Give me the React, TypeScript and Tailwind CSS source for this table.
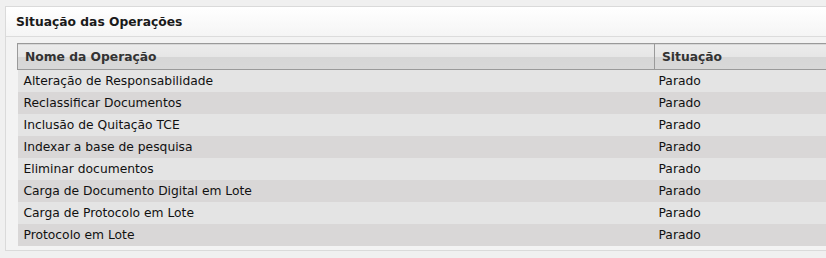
const operacoes = [
  "Alteração de Responsabilidade",
  "Reclassificar Documentos",
  "Inclusão de Quitação TCE",
  "Indexar a base de pesquisa",
  "Eliminar documentos",
  "Carga de Documento Digital em Lote",
  "Carga de Protocolo em Lote",
  "Protocolo em Lote",
];

export default function App() {
  return (
    <div className="h-[258px] w-[826px] overflow-hidden bg-[#f0f0f0] pl-[5px] pt-[6px] font-['DejaVu_Sans',Verdana,sans-serif] text-[12.3px] text-[#111]">
      <div className="h-[245px] w-[900px] border border-[#dadada] bg-[#f3f3f3]">
        {/* panel title */}
        <div className="flex h-[30px] items-center border-b border-[#dcdcdc] bg-gradient-to-b from-white to-[#f5f5f5] pl-[10px] pt-[2px] font-bold text-[#1a1a1a]">
          Situação das Operações
        </div>

        <div className="pl-[11px] pt-[6px]">
          <table className="w-[900px] border-collapse">
            <thead>
              <tr className="h-[26px] border-t border-b border-[#9a9a9a] bg-[linear-gradient(to_bottom,#ececec_0%,#e6e6e6_48%,#d6d6d6_52%,#d8d8d8_100%)] text-left font-bold text-[#333]">
                <th className="w-[637px] border-l border-r border-[#9a9a9a] pl-[7px] pt-[1px] font-bold">
                  Nome da Operação
                </th>
                <th className="pl-[7px] pt-[1px] font-bold">Situação</th>
              </tr>
            </thead>
            <tbody>
              {operacoes.map((nome, i) => (
                <tr
                  key={nome}
                  className={i % 2 === 0 ? "h-[22px] bg-[#e4e4e4]" : "h-[22px] bg-[#d9d7d7]"}
                >
                  <td className="pl-[6px] pt-[1px]">{nome}</td>
                  <td className="pl-[4px] pt-[1px]">Parado</td>
                </tr>
              ))}
            </tbody>
          </table>
        </div>
      </div>
    </div>
  );
}
